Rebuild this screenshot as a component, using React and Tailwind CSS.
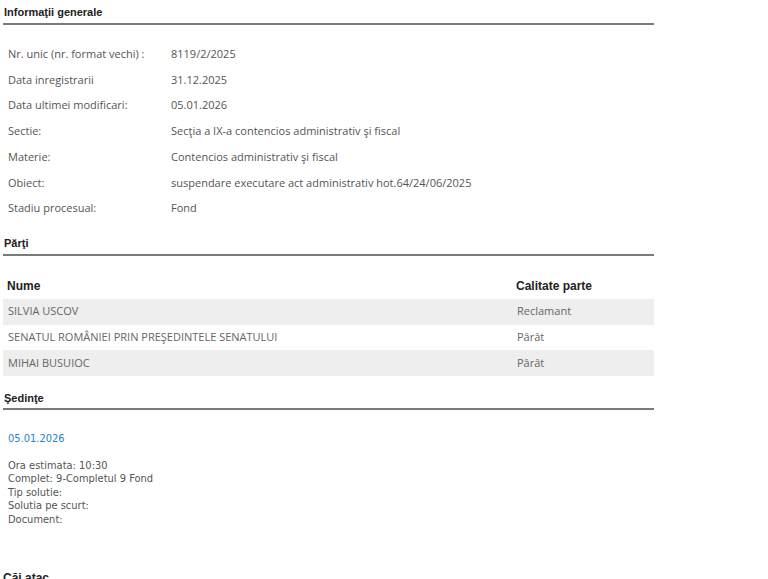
import React from "react";

const info = [
  ["Nr. unic (nr. format vechi) :", "8119/2/2025"],
  ["Data inregistrarii", "31.12.2025"],
  ["Data ultimei modificari:", "05.01.2026"],
  ["Sectie:", "Secţia a IX-a contencios administrativ şi fiscal"],
  ["Materie:", "Contencios administrativ şi fiscal"],
  ["Obiect:", "suspendare executare act administrativ hot.64/24/06/2025"],
  ["Stadiu procesual:", "Fond"],
];

const parti = [
  ["SILVIA USCOV", "Reclamant"],
  ["SENATUL ROMÂNIEI PRIN PREŞEDINTELE SENATULUI", "Pârât"],
  ["MIHAI BUSUIOC", "Pârât"],
];

function SectionTitle({ children }) {
  return (
    <h2 className="font-['Liberation_Sans',Arial,sans-serif] font-bold text-[11px] text-[#222] pl-[1px] pb-[2px] border-b-2 border-[#7a7a7a]">
      {children}
    </h2>
  );
}

export default function App() {
  return (
    <div className="bg-white w-[768px] h-[579px] overflow-hidden">
      <div className="w-[651px] ml-[3px] pt-[4px]">
        <SectionTitle>Informaţii generale</SectionTitle>
        <div className="pt-[17px] pb-[14px] font-['Open_Sans',sans-serif] text-[11px] text-[#555]">
          {info.map(([label, value]) => (
            <div key={label} className="flex h-[25.7px] items-center">
              <div className="w-[168px] pl-[5px]">{label}</div>
              <div>{value}</div>
            </div>
          ))}
        </div>

        <SectionTitle>Părţi</SectionTitle>
        <table className="w-full mt-[21px] border-collapse">
          <thead>
            <tr className="font-['Liberation_Sans',Arial,sans-serif] text-[12px] font-bold text-[#222] text-left">
              <th className="pl-[4px] pb-[4px] font-bold">Nume</th>
              <th className="w-[139px] pl-[1px] pb-[4px] font-bold">Calitate parte</th>
            </tr>
          </thead>
          <tbody className="font-['Open_Sans',sans-serif] text-[11px] text-[#666]">
            {parti.map(([nume, calitate], i) => (
              <tr key={nume} className={i % 2 === 0 ? "bg-[#eeeeee] h-[25.7px]" : "bg-white h-[25.7px]"}>
                <td className="pl-[5px]">{nume}</td>
                <td className="pl-[2px]">{calitate}</td>
              </tr>
            ))}
          </tbody>
        </table>

        <div className="mt-[14px]">
          <SectionTitle>Şedinţe</SectionTitle>
        </div>
        <div className="pl-[5px] pt-[21px] font-['DejaVu_Sans_Condensed','DejaVu_Sans',sans-serif] text-[11px]">
          <div className="text-[#2a80d2]">05.01.2026</div>
          <div className="mt-[11px] text-[#555] leading-[13.5px]">
            <div>Ora estimata: 10:30</div>
            <div>Complet: 9-Completul 9 Fond</div>
            <div>Tip solutie:</div>
            <div>Solutia pe scurt:</div>
            <div>Document:</div>
          </div>
        </div>

        <h2 className="mt-[43px] font-['Liberation_Sans',Arial,sans-serif] font-bold text-[12px] text-[#222]">
          Căi atac
        </h2>
      </div>
    </div>
  );
}
